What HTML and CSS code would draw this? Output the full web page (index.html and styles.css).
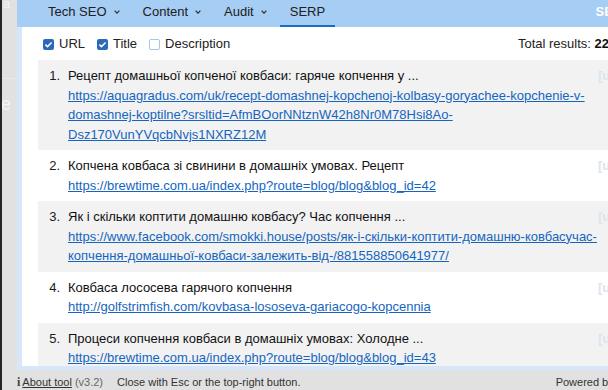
FILE: index.html
```html
<!DOCTYPE html>
<html lang="uk">
<head>
<meta charset="utf-8">
<title>SERP</title>
<link rel="stylesheet" href="styles.css">
</head>
<body>
<div class="screen">
  <div class="edge"></div>
  <div class="gutter">
    <span class="ghost ghost-a">a</span>
    <span class="ghost-line"></span>
    <span class="ghost ghost-e">e</span>
  </div>
  <div class="main">
    <div class="panel">
      <nav class="tabs">
        <div class="tab">Tech SEO <svg class="chev" width="6" height="4" viewBox="0 0 6 4"><polyline points="0.6,0.6 3,3.2 5.4,0.6" fill="none" stroke="#333" stroke-width="1.2"/></svg></div>
        <div class="tab">Content <svg class="chev" width="6" height="4" viewBox="0 0 6 4"><polyline points="0.6,0.6 3,3.2 5.4,0.6" fill="none" stroke="#333" stroke-width="1.2"/></svg></div>
        <div class="tab">Audit <svg class="chev" width="6" height="4" viewBox="0 0 6 4"><polyline points="0.6,0.6 3,3.2 5.4,0.6" fill="none" stroke="#333" stroke-width="1.2"/></svg></div>
        <div class="tab active">SERP</div>
        <div class="brand">SEO</div>
      </nav>
      <div class="content">
        <div class="options">
          <label class="opt"><span class="box checked"><svg width="11" height="11" viewBox="0 0 11 11"><polyline points="2.4,5.6 4.5,7.6 8.6,3.4" fill="none" stroke="#fff" stroke-width="1.5"/></svg></span>URL</label>
          <label class="opt"><span class="box checked"><svg width="11" height="11" viewBox="0 0 11 11"><polyline points="2.4,5.6 4.5,7.6 8.6,3.4" fill="none" stroke="#fff" stroke-width="1.5"/></svg></span>Title</label>
          <label class="opt"><span class="box empty"></span>Description</label>
          <div class="total">Total results: <b>22</b></div>
        </div>
        <ol class="results">
          <li class="result">
            <span class="num">1.</span>
            <div class="body">
              <div class="title">Рецепт домашньої копченої ковбаси: гаряче копчення у ...</div>
              <a class="url" href="#">https://aquagradus.com/uk/recept-domashnej-kopchenoj-kolbasy-goryachee-kopchenie-v-domashnej-koptilne?srsltid=AfmBOorNNtznW42h8Nr0M78Hsi8Ao-Dsz170VunYVqcbNvjs1NXRZ12M</a>
            </div>
            <span class="tag">[url]</span>
          </li>
          <li class="result">
            <span class="num">2.</span>
            <div class="body">
              <div class="title">Копчена ковбаса зі свинини в домашніх умовах. Рецепт</div>
              <a class="url" href="#">https://brewtime.com.ua/index.php?route=blog/blog&amp;blog_id=42</a>
            </div>
            <span class="tag">[url]</span>
          </li>
          <li class="result">
            <span class="num">3.</span>
            <div class="body">
              <div class="title">Як і скільки коптити домашню ковбасу? Час копчення ...</div>
              <a class="url" href="#">https://www.facebook.com/smokki.house/posts/як-і-скільки-коптити-домашню-ковбасучас-копчення-домашньої-ковбаси-залежить-від-/881558850641977/</a>
            </div>
            <span class="tag">[url]</span>
          </li>
          <li class="result">
            <span class="num">4.</span>
            <div class="body">
              <div class="title">Ковбаса лососева гарячого копчення</div>
              <a class="url" href="#">http://golfstrimfish.com/kovbasa-lososeva-gariacogo-kopcennia</a>
            </div>
            <span class="tag">[url]</span>
          </li>
          <li class="result">
            <span class="num">5.</span>
            <div class="body">
              <div class="title">Процеси копчення ковбаси в домашніх умовах: Холодне ...</div>
              <a class="url" href="#">https://brewtime.com.ua/index.php?route=blog/blog&amp;blog_id=43</a>
            </div>
            <span class="tag">[url]</span>
          </li>
        </ol>
      </div>
    </div>
    <footer class="foot">
      <b class="info">i</b>
      <a class="about" href="#">About tool</a>
      <span class="ver">(v3.2)</span>
      <span class="hint">Close with Esc or the top-right button.</span>
      <span class="powered">Powered by SEO</span>
    </footer>
  </div>
</div>
</body>
</html>
```
FILE: styles.css
```css
html, body {
  margin: 0;
  width: 608px;
  height: 390px;
  overflow: hidden;
}
body {
  background: #e1e1e1;
  font-family: "Liberation Sans", Arial, sans-serif;
  font-size: 13px;
  color: #1a1a1a;
}
.screen {
  display: flex;
  height: 390px;
}
.edge {
  width: 2px;
  flex: none;
  background: #262626;
}
.gutter {
  width: 15px;
  flex: none;
  display: flex;
  flex-direction: column;
  overflow: hidden;
}
.ghost {
  display: block;
  color: #f2f4f6;
}
.ghost-a {
  font-size: 13px;
  line-height: 13px;
  margin-top: -3.5px;
  padding-left: 1px;
}
.ghost-line {
  display: block;
  height: 1px;
  background: #e9e9e9;
  margin-top: 68.5px;
}
.ghost-e {
  font-size: 18px;
  line-height: 18px;
  margin-top: 16px;
  margin-left: -1px;
}
.main {
  flex: none;
  width: 648px;
  display: flex;
  flex-direction: column;
}
.panel {
  height: 370px;
  flex: none;
  box-sizing: border-box;
  padding-bottom: 4px;
  background: #d6e7fa;
  display: flex;
  flex-direction: column;
}
.tabs {
  flex: none;
  height: 27px;
  background: #a6cdf4;
  display: flex;
  padding: 0 42px 0 21px;
}
.tab {
  display: flex;
  align-items: flex-start;
  gap: 7px;
  padding: 0 10px;
  height: 25px;
  line-height: 23px;
  border-bottom: 2px solid transparent;
  color: #202020;
}
.tab + .tab {
  margin-left: 3px;
}
.tab.active {
  border-bottom-color: #1a6dc4;
}
.chev {
  margin-top: 10px;
}
.brand {
  margin-left: auto;
  color: #fff;
  font-weight: bold;
  line-height: 23px;
}
.content {
  flex: 1;
  min-height: 0;
  margin: 0 5px;
  padding: 0 16px;
  background: #fff;
  display: flex;
  flex-direction: column;
  overflow: hidden;
}
.options {
  flex: none;
  display: flex;
  align-items: center;
  height: 20px;
  line-height: 20px;
  padding: 7px 0 0 5px;
  margin-bottom: 6px;
  color: #222;
}
.opt {
  display: flex;
  align-items: center;
  gap: 5px;
  margin-right: 12px;
}
.box {
  width: 11px;
  height: 11px;
  box-sizing: border-box;
  border-radius: 2px;
  display: block;
}
.box svg {
  display: block;
}
.box.checked {
  background: #2a6ab8;
}
.box.empty {
  background: #fff;
  border: 1px solid #a9c6ea;
}
.total {
  margin-left: auto;
  margin-right: 35px;
}
.total b {
  color: #111;
}
.results {
  list-style: none;
  margin: 0;
  padding: 0;
}
.result {
  display: grid;
  grid-template-columns: 30px 530px 1fr;
  padding: 6px 0;
  line-height: 19.5px;
}
.result:nth-child(odd) {
  background: #f2f2f2;
}
.num {
  text-align: right;
  padding-right: 8px;
  color: #1a1a1a;
}
.title {
  color: #111;
}
.url {
  color: #1565c0;
  text-decoration: underline;
}
.tag {
  color: #dbe4ed;
  font-weight: bold;
  white-space: nowrap;
  overflow: hidden;
}
.foot {
  flex: none;
  height: 20px;
  box-sizing: border-box;
  padding: 3px 25px 0 0;
  display: flex;
  align-items: flex-start;
  font-size: 11px;
  line-height: 18px;
  color: #333;
  white-space: nowrap;
}
.info {
  font-family: "Liberation Serif", serif;
  font-size: 12px;
  color: #444;
  margin-right: 2px;
}
.about {
  color: #333;
  text-decoration: underline;
}
.ver {
  color: #666;
  margin-left: 3px;
}
.hint {
  margin-left: 14px;
}
.powered {
  margin-left: auto;
}
```
